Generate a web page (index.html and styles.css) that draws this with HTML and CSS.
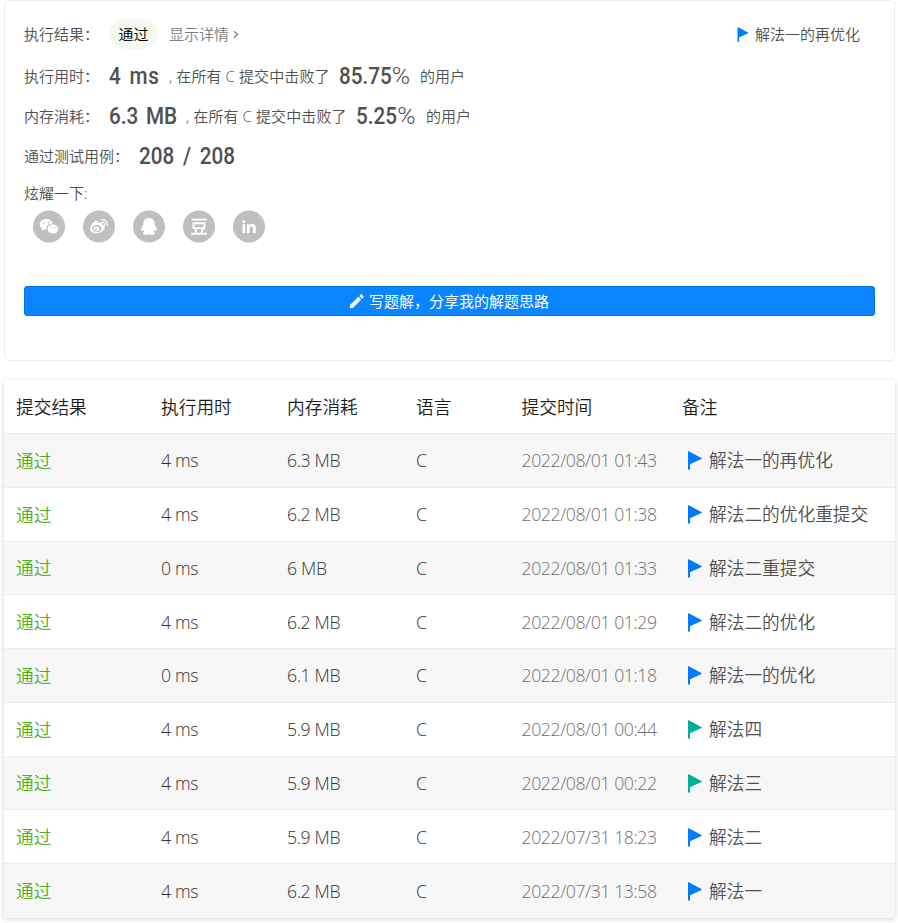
FILE: index.html
```html
<!DOCTYPE html>
<html lang="zh-CN">
<head>
<meta charset="utf-8">
<title>提交记录</title>
<link rel="stylesheet" href="styles.css">
</head>
<body>
<svg class="defs" width="0" height="0" aria-hidden="true">
  <symbol id="flag" viewBox="0 0 14 19"><path d="M0 .8Q0 0 .8.3L13.4 7q.9.5 0 1L2 13.2V18q0 .8-1 .8T0 18z"/></symbol>
</svg>
<section class="result">
  <div class="line first">
    <span class="label">执行结果：</span><span class="pill">通过</span><a class="detail">显示详情</a>
    <svg class="chevron" viewBox="0 0 6 8"><path d="M1 .8 4.5 4 1 7.2"/></svg>
    <span class="note"><svg class="flag"><use href="#flag"/></svg><span>解法一的再优化</span></span>
  </div>
  <div class="line"><span class="label">执行用时：</span><span class="num runtime">4 ms</span><span class="beat">, 在所有 C 提交中击败了</span><span class="num pct">85.75<i>%</i></span><span>的用户</span></div>
  <div class="line"><span class="label">内存消耗：</span><span class="num memory">6.3 MB</span><span class="beat">, 在所有 C 提交中击败了</span><span class="num pct small">5.25<i>%</i></span><span>的用户</span></div>
  <div class="line"><span class="label wide">通过测试用例：</span><span class="num cases">208 / 208</span></div>
  <div class="share-label">炫耀一下:</div>
  <div class="share">
    <svg viewBox="0 0 32 32"><circle cx="16" cy="16" r="16"/><g fill="#fff"><path d="M13.4 8.5c-4 0-6.6 2.4-6.6 5.4 0 1.7.9 3.1 2.3 4.1l-.6 2 2.3-1.1c.8.3 1.7.4 2.7.4-.8-3.8 2.2-6.1 6.2-6.2-.7-2.8-3.2-4.6-6.3-4.6z"/><path d="M20 14c-3.2 0-5.4 1.9-5.4 4.5s2.3 4.4 5.2 4.4c.7 0 1.4-.1 2-.3l1.9 1-.5-1.7c1.2-.8 2-2 2-3.4 0-2.6-2.2-4.5-5.2-4.5z"/></g><g><circle cx="11" cy="12.2" r=".9"/><circle cx="15.7" cy="12.2" r=".9"/><circle cx="18.2" cy="17" r=".7"/><circle cx="21.9" cy="17" r=".7"/></g></svg>
    <svg viewBox="0 0 32 32"><circle cx="16" cy="16" r="16"/><path fill="#fff" d="M14.6 10.2c.9.5.8 1.5.5 2.4 2.4-1 4.9-.8 4.4 2 2 .6 2.7 1.8 2 3.5-1 2.7-4.3 4.7-8 4.7-3.8 0-6.4-1.9-6.4-4.6 0-3.4 4.8-9 7.5-8z"/><ellipse cx="13.8" cy="18" rx="4.8" ry="3.4"/><ellipse cx="13.4" cy="18.3" rx="3" ry="2.4" fill="#fff"/><circle cx="12.7" cy="18.8" r="1.1"/><path class="weibo-wave" d="M18.2 9.2c3.6-.7 6.7 2.2 5.8 6M18.8 11.7c1.8-.2 3.2 1.1 2.8 2.9"/></svg>
    <svg viewBox="0 0 32 32"><circle cx="16" cy="16" r="16"/><path fill="#fff" d="M16 7.5c-3.6 0-5.7 2.4-5.6 5.5v1.2c-1.4 2-2.6 4.3-2.1 6 .3.7 1 0 1.7-.9.2.9.7 1.7 1.3 2.3-2 .7-1.5 2.8.9 2.8 1.5 0 3-.3 3.8-1 .8.7 2.3 1 3.8 1 2.4 0 2.9-2.1.9-2.8.6-.6 1.1-1.4 1.3-2.3.7.9 1.4 1.6 1.7.9.5-1.7-.7-4-2.1-6V13c.1-3.1-2-5.5-5.6-5.5z"/></svg>
    <svg viewBox="0 0 32 32"><circle cx="16" cy="16" r="16"/><path class="douban" d="M8.3 9.1h15.4M10.5 12.8h11v4.8h-11zM12.3 18.5l1.2 4M19.7 18.5l-1.2 4M8 23.2h16"/></svg>
    <svg viewBox="0 0 32 32"><circle cx="16" cy="16" r="16"/><g fill="#fff"><circle cx="10.8" cy="11.2" r="1.6"/><path d="M9.4 13.8h2.8v8.8H9.4zM14 13.8h2.7V15c.6-.9 1.5-1.4 2.7-1.4 2.2 0 3.4 1.4 3.4 3.9v5.1H20v-4.7c0-1.3-.5-2-1.6-2s-1.7.8-1.7 2v4.7H14z"/></g></svg>
  </div>
  <button class="write"><svg viewBox="0 0 14 14"><path d="M0 14v-3L8.4 2.8l2.8 2.8L3 14zM9.3 1.9 10.6.6q.6-.6 1.2 0l1.6 1.6q.6.6 0 1.2l-1.3 1.3z"/></svg><span>写题解，分享我的解题思路</span></button>
</section>

<table class="list">
  <colgroup><col class="c1"><col class="c2"><col class="c3"><col class="c4"><col class="c5"><col></colgroup>
  <thead><tr><th>提交结果</th><th>执行用时</th><th>内存消耗</th><th>语言</th><th>提交时间</th><th>备注</th></tr></thead>
  <tbody>
    <tr><td>通过</td><td>4 ms</td><td>6.3 MB</td><td>C</td><td>2022/08/01 01:43</td><td><svg class="flag"><use href="#flag"/></svg>解法一的再优化</td></tr>
    <tr><td>通过</td><td>4 ms</td><td>6.2 MB</td><td>C</td><td>2022/08/01 01:38</td><td><svg class="flag"><use href="#flag"/></svg>解法二的优化重提交</td></tr>
    <tr><td>通过</td><td>0 ms</td><td>6 MB</td><td>C</td><td>2022/08/01 01:33</td><td><svg class="flag"><use href="#flag"/></svg>解法二重提交</td></tr>
    <tr><td>通过</td><td>4 ms</td><td>6.2 MB</td><td>C</td><td>2022/08/01 01:29</td><td><svg class="flag"><use href="#flag"/></svg>解法二的优化</td></tr>
    <tr><td>通过</td><td>0 ms</td><td>6.1 MB</td><td>C</td><td>2022/08/01 01:18</td><td><svg class="flag"><use href="#flag"/></svg>解法一的优化</td></tr>
    <tr><td>通过</td><td>4 ms</td><td>5.9 MB</td><td>C</td><td>2022/08/01 00:44</td><td><svg class="flag teal"><use href="#flag"/></svg>解法四</td></tr>
    <tr><td>通过</td><td>4 ms</td><td>5.9 MB</td><td>C</td><td>2022/08/01 00:22</td><td><svg class="flag teal"><use href="#flag"/></svg>解法三</td></tr>
    <tr><td>通过</td><td>4 ms</td><td>5.9 MB</td><td>C</td><td>2022/07/31 18:23</td><td><svg class="flag"><use href="#flag"/></svg>解法二</td></tr>
    <tr><td>通过</td><td>4 ms</td><td>6.2 MB</td><td>C</td><td>2022/07/31 13:58</td><td><svg class="flag"><use href="#flag"/></svg>解法一</td></tr>
  </tbody>
</table>
</body>
</html>
```
FILE: styles.css
```css
* { box-sizing: border-box; }
body {
  margin: 0;
  height: 923px;
  overflow: hidden;
  background: #fff;
  color: #505050;
  font: 350 15px/20px "Open Sans", "Noto Sans CJK SC", sans-serif;
}
.defs { position: absolute; }
.result {
  width: 891px;
  height: 361px;
  margin-left: 4px;
  padding: 13px 19px 0;
  border: 1px solid #ececec;
  border-radius: 5px;
}
.line { display: flex; align-items: center; height: 40px; white-space: nowrap; }
.line.first { height: 40px; margin-bottom: 2px; }
.label { width: 85px; }
.label.wide { width: 115px; }
.pill {
  width: 49px;
  height: 30px;
  margin-right: 11px;
  border-radius: 15px;
  background: #f4faf0;
  color: #000;
  line-height: 30px;
  text-align: center;
}
.detail { color: #808080; }
.chevron { width: 6px; height: 9px; margin-left: 4px; fill: none; stroke: #808080; stroke-width: 1.2; }
.note { display: flex; align-items: center; margin-left: auto; margin-right: 15px; }
.flag { width: 14px; height: 19px; fill: #007aff; }
.teal { fill: #00af9b; }
.note .flag { width: 12px; height: 15px; margin-right: 6px; }
.num {
  flex: none;
  color: #505050;
  font: 500 23.5px/28px Roboto, sans-serif;
  word-spacing: 3px;
  transform: scaleX(.88);
  transform-origin: left;
}
.num i { display: inline-block; font-style: normal; font-weight: 300; transform: scaleX(1.2); transform-origin: left; }
.runtime { width: 60px; letter-spacing: .6px; }
.memory { width: 77px; }
.cases { word-spacing: 4px; }
.beat { width: 170px; letter-spacing: .1px; }
.memory + .beat { width: 170px; }
.pct { width: 81px; }
.pct.small { width: 70px; }
.share-label { height: 34px; padding-top: 7px; }
.share { display: flex; gap: 18px; padding-left: 9px; height: 76px; }
.share svg { width: 32px; height: 33px; fill: #bfbfbf; }
.weibo-wave { fill: none; stroke: #fff; stroke-width: 1.2; stroke-linecap: round; }
.douban { fill: none; stroke: #fff; stroke-width: 1.9; }
.write {
  display: flex;
  align-items: center;
  justify-content: center;
  width: 851px;
  height: 30px;
  padding: 0;
  border: 1px solid #0872dd;
  border-radius: 3px;
  background: #0a84ff;
  color: #fff;
  font: 400 15px/28px "Open Sans", "Noto Sans CJK SC", sans-serif;
}
.write svg { width: 14px; height: 14px; margin-right: 5px; fill: #fff; }
.list {
  width: 891px;
  margin: 19px 0 0 4px;
  border-spacing: 0;
  table-layout: fixed;
  box-shadow: 0 1px 5px rgba(0, 0, 0, .18);
  font-size: 17.7px;
  line-height: 24px;
  white-space: nowrap;
}
.c1 { width: 145px; }
.c2 { width: 126px; }
.c3 { width: 129px; }
.c4 { width: 105.5px; }
.c5 { width: 160.5px; }
th, td { padding: 0 0 0 12px; text-align: left; font-weight: inherit; }
th { height: 54px; border-bottom: 1px solid #ececec; color: #1c1c1c; }
td { height: 53.75px; border-bottom: 1px solid #ececec; }
tbody tr:nth-child(odd) { background: #f7f7f7; }
tbody tr:last-child td { border-bottom: 0; }
td:first-child { padding-top: 1px; color: #4caf1c; }
td:nth-child(2), td:nth-child(3), td:nth-child(4) { color: #333; }
td:nth-child(2), td:nth-child(3) { letter-spacing: -.35px; }
td:nth-child(5) { color: #707070; letter-spacing: -.43px; }
td .flag { margin: 0 7px 0 6px; vertical-align: -3px; }
```
